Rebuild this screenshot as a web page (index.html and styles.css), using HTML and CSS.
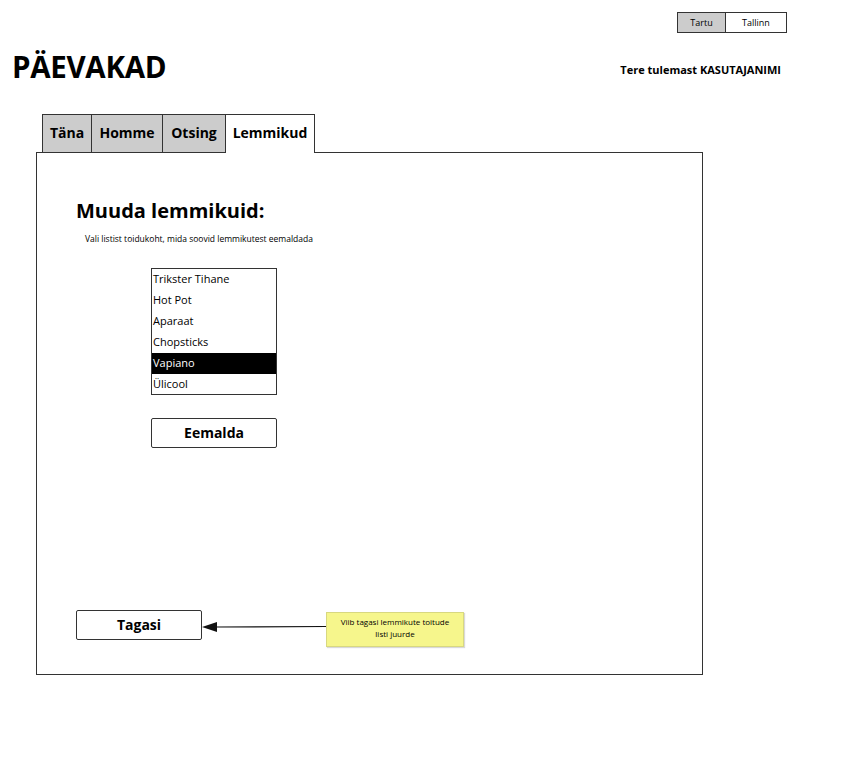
FILE: index.html
```html
<!DOCTYPE html>
<html>
<head>
<meta charset="utf-8">
<link rel="stylesheet" href="styles.css">
</head>
<body>
<div class="page">
  <div class="city-row">
    <div class="toggle">
      <span class="city active">Tartu</span>
      <span class="city">Tallinn</span>
    </div>
  </div>
  <div class="title-row">
    <h1 class="title">PÄEVAKAD</h1>
    <div class="greeting">Tere tulemast KASUTAJANIMI</div>
  </div>
  <div class="tabs">
    <div class="tab">Täna</div>
    <div class="tab">Homme</div>
    <div class="tab">Otsing</div>
    <div class="tab current">Lemmikud</div>
  </div>
  <div class="panel">
    <h2 class="heading">Muuda lemmikuid:</h2>
    <p class="hint">Vali listist toidukoht, mida soovid lemmikutest eemaldada</p>
    <div class="list">
      <div class="item">Trikster Tihane</div>
      <div class="item">Hot Pot</div>
      <div class="item">Aparaat</div>
      <div class="item">Chopsticks</div>
      <div class="item selected">Vapiano</div>
      <div class="item">Ülicool</div>
    </div>
    <div class="btn remove">Eemalda</div>
    <div class="bottom-row">
      <div class="btn back">Tagasi</div>
      <svg class="arrow" width="124" height="12" viewBox="0 0 124 12">
        <path d="M14 6 L124 5.5" stroke="#111" stroke-width="1.2" fill="none"/>
        <path d="M0 6 L15 1 L15 11 Z" fill="#111"/>
      </svg>
      <div class="note">Viib tagasi lemmikute toitude<br>listi juurde</div>
    </div>
  </div>
</div>
</body>
</html>
```

FILE: styles.css
```css
* { box-sizing: border-box; }
body {
  margin: 0;
  background: #fff;
  font-family: "Open Sans", "Noto Sans", sans-serif;
  color: #000;
}
.page { width: 862px; height: 775px; }
.city-row {
  display: flex;
  justify-content: flex-end;
  padding: 12px 75px 0 0;
}
.toggle {
  display: flex;
  border: 1px solid #333;
  height: 21px;
}
.city {
  font-size: 9px;
  line-height: 19px;
  text-align: center;
  width: 60px;
}
.city.active {
  width: 48px;
  background: #cccccc;
  border-right: 1px solid #333;
}
.title-row {
  display: flex;
  justify-content: space-between;
  align-items: baseline;
  padding: 0 81px 0 12px;
  margin-top: 14px;
}
.title {
  margin: 0;
  font-size: 29.5px;
  font-weight: 700;
  line-height: 40px;
  letter-spacing: -0.3px;
}
.greeting {
  font-size: 11px;
  font-weight: 700;
  position: relative;
  top: -4px;
}
.tabs {
  display: flex;
  margin: 27px 0 0 42px;
  align-items: flex-end;
}
.tab {
  height: 38px;
  border: 1px solid #333;
  border-bottom: none;
  border-right: none;
  background: #cccccc;
  font-size: 14px;
  font-weight: 700;
  line-height: 36px;
  text-align: center;
  white-space: nowrap;
}
.tab:nth-child(1) { width: 49px; }
.tab:nth-child(2) { width: 71px; }
.tab:nth-child(3) { width: 63px; }
.tab.current {
  width: 90px;
  height: 39px;
  background: #fff;
  border-right: 1px solid #333;
  margin-bottom: -1px;
  position: relative;
  z-index: 1;
}
.panel {
  margin-left: 36px;
  width: 667px;
  height: 523px;
  border: 1px solid #333;
  padding: 44px 0 0 39px;
}
.heading {
  margin: 0;
  font-size: 20px;
  font-weight: 700;
  line-height: 28px;
}
.hint {
  margin: 8px 0 0 9px;
  font-size: 8.5px;
  line-height: 12px;
}
.list {
  margin: 23px 0 0 75px;
  width: 126px;
  height: 127px;
  border: 1px solid #333;
}
.item {
  font-size: 11px;
  height: 21px;
  line-height: 20px;
  padding-left: 1px;
  white-space: nowrap;
}
.item.selected {
  background: #000;
  color: #fff;
}
.btn {
  width: 126px;
  height: 30px;
  border: 1px solid #333;
  border-radius: 2px;
  font-size: 14px;
  font-weight: 700;
  text-align: center;
  line-height: 27px;
}
.remove {
  margin: 23px 0 0 75px;
}
.bottom-row {
  display: flex;
  align-items: flex-start;
  margin-top: 162px;
}
.arrow {
  margin-top: 11px;
  flex: none;
}
.note {
  margin-top: 2px;
  width: 138px;
  height: 35px;
  background: #f6f68c;
  border: 1px solid #d8d880;
  box-shadow: 1px 1px 1px rgba(0,0,0,0.15);
  font-size: 8px;
  line-height: 12px;
  text-align: center;
  padding-top: 3px;
}
```
